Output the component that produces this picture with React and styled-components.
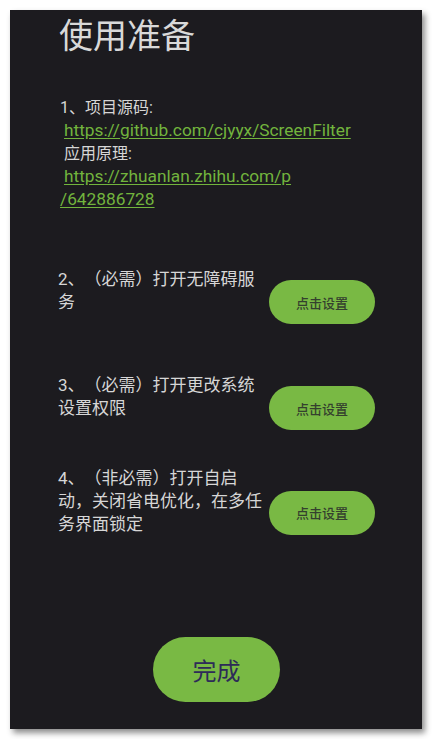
import React from "react";
import styled, { createGlobalStyle } from "styled-components";

const GlobalStyle = createGlobalStyle`
  body {
    margin: 0;
    background: #ffffff;
    font-family: Roboto, "Noto Sans CJK SC", sans-serif;
    text-spacing-trim: space-all;
  }
`;

const Panel = styled.main`
  box-sizing: border-box;
  margin: 10px;
  width: 412px;
  height: 719px;
  background: #1c1b1f;
  box-shadow: 3px 4px 6px rgba(0, 0, 0, 0.45);
  padding: 6px 47px 27px 48px;
  display: flex;
  flex-direction: column;
  color: #d6d6d6;
`;

const Title = styled.h1`
  margin: 0;
  padding-left: 1px;
  font-size: 34px;
  line-height: 41px;
  font-weight: 400;
  color: #d9d9d9;
`;

const Intro = styled.div`
  margin-top: 39px;
  padding-left: 2px;
  font-size: 16px;
  line-height: 23px;
`;

const Line = styled.div`
  white-space: pre;
`;

const Link = styled.a`
  color: #72b43d;
  font-size: 17.3px;
  text-decoration: underline;
  text-underline-offset: 2px;
`;

const Row = styled.section`
  display: flex;
  align-items: center;
  justify-content: space-between;
  margin-top: ${(p) => p.$top}px;
`;

const StepText = styled.p`
  margin: 0;
  width: 206px;
  font-size: 17px;
  line-height: 23px;
`;

const SetButton = styled.button`
  margin-top: 22px;
  width: 106px;
  height: 44px;
  border: none;
  border-radius: 22px;
  background: #79b944;
  color: #34402e;
  font-family: inherit;
  font-size: 13px;
  font-weight: 500;
  cursor: pointer;
`;

const DoneButton = styled.button`
  margin-top: auto;
  align-self: center;
  width: 127px;
  height: 65px;
  border: none;
  border-radius: 33px;
  background: #79b944;
  color: #2d2b58;
  font-family: inherit;
  font-size: 24px;
  cursor: pointer;
`;

const steps = [
  { text: "2、（必需）打开无障碍服务", top: 47 },
  { text: "3、（必需）打开更改系统设置权限", top: 40 },
  { text: "4、（非必需）打开自启动，关闭省电优化，在多任务界面锁定", top: 37 },
];

export default function App() {
  return (
    <>
      <GlobalStyle />
      <Panel>
        <Title>使用准备</Title>
        <Intro>
          <Line>1、项目源码:</Line>
          <Line>
            {" "}
            <Link>https://github.com/cjyyx/ScreenFilter</Link>
          </Line>
          <Line> 应用原理:</Line>
          <Line>
            {" "}
            <Link>https://zhuanlan.zhihu.com/p</Link>
          </Line>
          <Line>
            <Link>/642886728</Link>
          </Line>
        </Intro>
        {steps.map((s, i) => (
          <Row key={i} $top={s.top}>
            <StepText>{s.text}</StepText>
            <SetButton>点击设置</SetButton>
          </Row>
        ))}
        <DoneButton>完成</DoneButton>
      </Panel>
    </>
  );
}
